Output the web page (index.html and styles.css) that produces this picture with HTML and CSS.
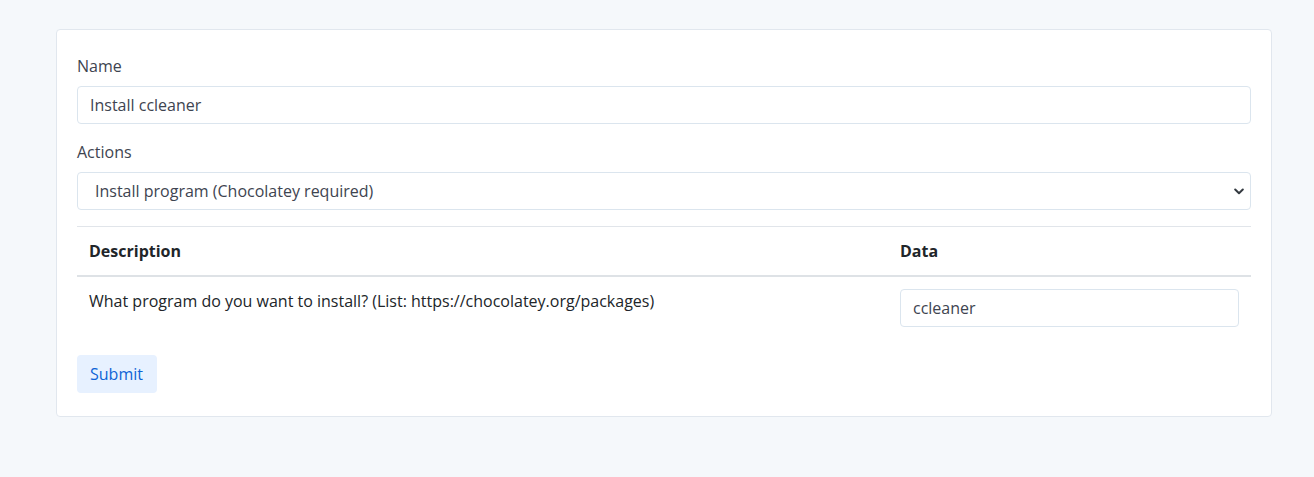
FILE: index.html
```html
<!DOCTYPE html>
<html>
<head>
<meta charset="utf-8">
<link rel="stylesheet" href="styles.css">
</head>
<body>
<div class="page">
  <form class="card">
    <div class="field">
      <label class="label">Name</label>
      <input class="control" type="text" value="Install ccleaner">
    </div>
    <div class="field">
      <label class="label">Actions</label>
      <div class="select">
        <span class="select-text">Install program (Chocolatey required)</span>
        <svg class="chev" width="10" height="7" viewBox="0 0 10 7"><path d="M1.2 1.5 L5 5.2 L8.8 1.5" fill="none" stroke="#343a40" stroke-width="2" stroke-linecap="round" stroke-linejoin="round"/></svg>
      </div>
    </div>
    <table class="table">
      <thead>
        <tr><th class="col-desc">Description</th><th class="col-data">Data</th></tr>
      </thead>
      <tbody>
        <tr>
          <td>What program do you want to install? (List: https://chocolatey.org/packages)</td>
          <td><input class="control" type="text" value="ccleaner"></td>
        </tr>
      </tbody>
    </table>
    <button class="btn" type="button">Submit</button>
  </form>
</div>
</body>
</html>
```
FILE: styles.css
```css
* { box-sizing: border-box; }
html, body { margin: 0; padding: 0; }
body {
  background: #f5f8fb;
  font-family: "Open Sans", "Liberation Sans", sans-serif;
  font-size: 16px;
  line-height: 24px;
  color: #212529;
}
.page { padding: 29px 42px 0 56px; }
.card {
  display: block;
  width: 1216px;
  background: #fff;
  border: 1px solid #e1e7ee;
  border-radius: 4px;
  padding: 24px 20px 23px;
}
.field { margin-bottom: 16px; }
.label {
  display: block;
  color: #3e4450;
  margin-bottom: 8px;
}
.control {
  display: block;
  width: 100%;
  height: 38px;
  border: 1px solid #dbe5ee;
  border-radius: 4px;
  padding: 6px 12px;
  font: inherit;
  color: #3e4450;
  background: #fff;
  outline: none;
}
.select {
  display: flex;
  align-items: center;
  justify-content: space-between;
  height: 38px;
  border: 1px solid #dbe5ee;
  border-radius: 4px;
  padding: 6px 6px 6px 17px;
  color: #3e4450;
}
.chev { flex: none; }
.table {
  width: 100%;
  border-collapse: collapse;
  margin-bottom: 16px;
}
.table th {
  text-align: left;
  font-weight: 700;
  padding: 12px 12px;
  border-top: 1px solid #e1e5ea;
  border-bottom: 2px solid #dee2e6;
  color: #212529;
}
.col-data { width: 363px; }
.table td {
  padding: 12px 12px;
  vertical-align: top;
  color: #212529;
}
.btn {
  display: block;
  height: 38px;
  padding: 6px 14px 6px 13px;
  border: 0;
  border-radius: 4px;
  background: #e7f1ff;
  color: #0d63d6;
  font: inherit;
  cursor: pointer;
}
```
